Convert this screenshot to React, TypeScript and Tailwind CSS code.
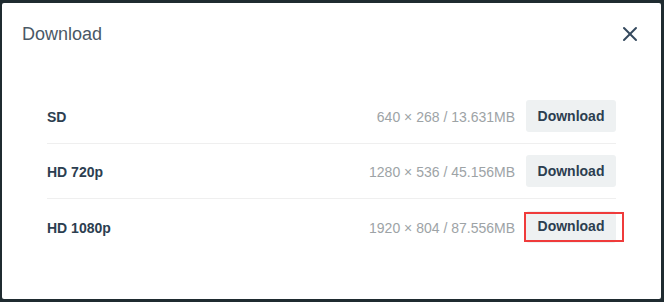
import { X } from 'lucide-react';

const options = [
  { label: 'SD', info: '640 × 268 / 13.631MB' },
  { label: 'HD 720p', info: '1280 × 536 / 45.156MB' },
  { label: 'HD 1080p', info: '1920 × 804 / 87.556MB', marked: true },
];

export default function App() {
  return (
    <div
      className="h-[302px] w-[664px] overflow-hidden bg-[#1f2b30] pl-[2px] pt-[3px]"
      style={{ fontFamily: '"Liberation Sans", Arial, sans-serif' }}
    >
      <div className="w-[659px] rounded-[2px] bg-white pb-[45px]">
        <div className="flex items-center justify-between pl-[20px] pr-[19px] pt-[19px]">
          <h2 className="text-[18px] leading-[24px] font-normal text-[#4a5866]">Download</h2>
          <X className="h-6 w-6 text-[#34495e]" strokeWidth={2} />
        </div>

        <div className="mt-[43px] px-[45px]">
          {options.map((opt, i) => (
            <div
              key={opt.label}
              className={`flex h-[55px] items-center ${
                i < options.length - 1 ? 'border-b border-[#efefef]' : ''
              }`}
            >
              <span className="pt-[3px] text-[14px] font-bold text-[#2c3e50]">{opt.label}</span>
              <span className="ml-auto pt-[3px] text-[14px] text-[#9da3a6]">{opt.info}</span>
              <button className="relative ml-[11px] h-[32px] w-[90px] rounded-[3px] bg-[#eef1f2] text-[14px] font-bold text-[#2c3e50]">
                Download
                {opt.marked && (
                  <span className="absolute -left-[2px] -right-[8px] top-[1px] bottom-[1px] border-2 border-[#ef3b3b]" />
                )}
              </button>
            </div>
          ))}
        </div>
      </div>
    </div>
  );
}
